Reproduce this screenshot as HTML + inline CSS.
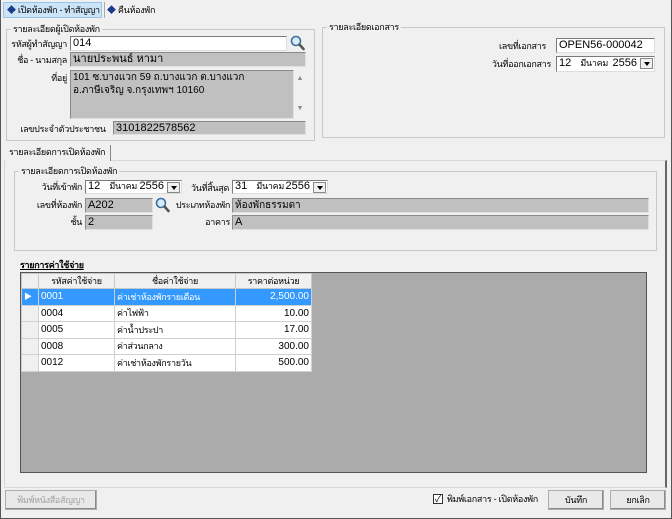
<!DOCTYPE html>
<html><head><meta charset="utf-8"><style>
*{box-sizing:border-box;margin:0;padding:0}
body{width:672px;height:519px;background:#f0f0f0;font-family:"Liberation Sans","Noto Sans CJK SC",sans-serif;font-size:11px;color:#000;position:relative;overflow:hidden}
.a{position:absolute;white-space:nowrap}
.th{font-size:9px;letter-spacing:-0.3px}
.win{left:0;top:0;width:672px;height:519px;border:1px solid #555;border-top:none}
.gb{border:1px solid #c8c8c8}
.gt{background:#f0f0f0;padding:0 2px;font-size:9px;line-height:12px;letter-spacing:-0.3px}
.lb{font-size:9px;line-height:14px;text-align:right;letter-spacing:-0.3px}
.in{border:1px solid #7a7a7a;border-right-color:#ddd;border-bottom-color:#ddd;background:#fff;padding-left:2px;line-height:13px;font-size:11px;overflow:hidden}
.ro{background:#c0c0c0;border:1px solid #8a8a8a;border-right-color:#e0e0e0;border-bottom-color:#e0e0e0}
.dd{position:absolute;right:1px;top:1px;width:13px;height:11px;background:#f0f0f0;border:1px solid #888}
.dd:after{content:"";position:absolute;left:3px;top:3px;border:3px solid transparent;border-top:4px solid #000;border-bottom:none}
.dt{font-size:11px}
.dt i{font-style:normal;font-size:9px;letter-spacing:-0.3px}
.dt b{font-weight:normal;position:absolute;right:17px;top:0}
.btn{border:1px solid #adadad;background:#e9e9e9;text-align:center;font-size:9px;line-height:18px;box-shadow:inset -1px -1px #8a8a8a;letter-spacing:-0.3px}
table{border-collapse:collapse;font-size:10px;table-layout:fixed}
td{border:1px solid #d0d0d0;height:16.5px;padding:0 2px;background:#fff;white-space:nowrap;overflow:hidden}
td.t{font-size:9px;letter-spacing:-0.3px}
th{font-weight:normal;background:#f0f0f0;border:1px solid #c8c8c8;height:15px;font-size:9px;letter-spacing:-0.3px}
</style></head><body>
<div class="a win"></div>
<div class="a th" style="left:3px;top:2px;width:99px;height:16px;background:#cce4f7;border:1px solid #99c4ea;line-height:14px;padding-left:3px"><span style="color:#1a3a8a">◆</span> เปิดห้องพัก - ทำสัญญา</div>
<div class="a" style="left:104px;top:2px;width:1px;height:16px;background:#aaa"></div>
<div class="a th" style="left:107px;top:2px;line-height:16px"><span style="color:#1a3a8a">◆</span> คืนห้องพัก</div>

<div class="a gb" style="left:6px;top:29px;width:309px;height:112px"></div>
<div class="a gt" style="left:11px;top:23px">รายละเอียดผู้เปิดห้องพัก</div>
<div class="a lb" style="left:6px;top:37px;width:61px">รหัสผู้ทำสัญญา</div>
<div class="a in" style="left:70px;top:36px;width:217px;height:15px">014</div>
<svg class="a" style="left:290px;top:35px" width="15" height="16" viewBox="0 0 15 16"><circle cx="6" cy="6" r="4.5" fill="#d8ecf8" stroke="#3a6ea5" stroke-width="1.6"/><path d="M9.5 9.5L13.5 14" stroke="#555" stroke-width="2.6" stroke-linecap="round"/></svg>
<div class="a lb" style="left:6px;top:53px;width:61px">ชื่อ - นามสกุล</div>
<div class="a in ro" style="left:70px;top:52px;width:236px;height:15px">นายประพนธ์ หามา</div>
<div class="a lb" style="left:6px;top:71px;width:61px">ที่อยู่</div>
<div class="a in ro" style="left:70px;top:70px;width:224px;height:49px;white-space:normal;line-height:13px;font-size:10px">101 ซ.บางแวก 59 ถ.บางแวก ต.บางแวก อ.ภาษีเจริญ จ.กรุงเทพฯ 10160</div>
<div class="a" style="left:294px;top:70px;width:12px;height:49px;color:#888;font-size:7px;text-align:center;line-height:10px;padding-top:4px;white-space:normal">▲<br><br><br>▼</div>
<div class="a lb" style="left:20px;top:122px;width:86px;text-align:center">เลขประจำตัวประชาชน</div>
<div class="a in ro" style="left:113px;top:121px;width:193px;height:14px;line-height:12px">3101822578562</div>

<div class="a gb" style="left:322px;top:27px;width:343px;height:111px"></div>
<div class="a gt" style="left:327px;top:21px">รายละเอียดเอกสาร</div>
<div class="a lb" style="left:440px;top:39px;width:106px">เลขที่เอกสาร</div>
<div class="a in" style="left:556px;top:38px;width:99px;height:15px">OPEN56-000042</div>
<div class="a lb" style="left:440px;top:57px;width:111px">วันที่ออกเอกสาร</div>
<div class="a in dt" style="left:556px;top:56px;width:99px;height:16px">12 &nbsp; <i>มีนาคม</i><b>2556</b><span class="dd"></span></div>

<div class="a" style="left:4px;top:160px;width:663px;height:328px;border:1px solid #d8d8d8;border-right:2px solid #666"></div>
<div class="a th" style="left:6px;top:145px;width:105px;height:16px;border-right:1px solid #888;background:#f0f0f0;line-height:15px;padding-left:3px">รายละเอียดการเปิดห้องพัก</div>

<div class="a gb" style="left:14px;top:171px;width:643px;height:80px"></div>
<div class="a gt" style="left:19px;top:165px">รายละเอียดการเปิดห้องพัก</div>
<div class="a lb" style="left:20px;top:180px;width:62px">วันที่เข้าพัก</div>
<div class="a in dt" style="left:85px;top:180px;width:97px;height:14px;line-height:11px">12 &nbsp; <i>มีนาคม</i><b>2556</b><span class="dd"></span></div>
<div class="a lb" style="left:185px;top:181px;width:44px">วันที่สิ้นสุด</div>
<div class="a in dt" style="left:232px;top:180px;width:96px;height:14px;line-height:11px">31 &nbsp; <i>มีนาคม</i><b>2556</b><span class="dd"></span></div>
<div class="a lb" style="left:20px;top:198px;width:62px">เลขที่ห้องพัก</div>
<div class="a in ro" style="left:85px;top:198px;width:68px;height:15px">A202</div>
<svg class="a" style="left:155px;top:197px" width="15" height="16" viewBox="0 0 15 16"><circle cx="6" cy="6" r="4.5" fill="#d8ecf8" stroke="#3a6ea5" stroke-width="1.6"/><path d="M9.5 9.5L13.5 14" stroke="#555" stroke-width="2.6" stroke-linecap="round"/></svg>
<div class="a lb" style="left:170px;top:198px;width:60px">ประเภทห้องพัก</div>
<div class="a in ro" style="left:232px;top:198px;width:417px;height:15px;font-size:10px">ห้องพักธรรมดา</div>
<div class="a lb" style="left:20px;top:215px;width:62px">ชั้น</div>
<div class="a in ro" style="left:85px;top:215px;width:68px;height:15px">2</div>
<div class="a lb" style="left:170px;top:215px;width:60px">อาคาร</div>
<div class="a in ro" style="left:232px;top:215px;width:417px;height:15px">A</div>

<div class="a" style="left:20px;top:258px;font-size:9px;font-weight:bold;text-decoration:underline;letter-spacing:-0.3px">รายการค่าใช้จ่าย</div>
<div class="a" style="left:20px;top:272px;width:627px;height:201px;background:#ababab;border:1px solid #555">
<table style="width:291px">
<tr><th style="width:17px"></th><th style="width:76px">รหัสค่าใช้จ่าย</th><th style="width:121px">ชื่อค่าใช้จ่าย</th><th>ราคาต่อหน่วย</th></tr>
<tr><td style="background:#3399ff;color:#fff;font-size:8px">▶</td><td style="background:#3399ff;color:#fff">0001</td><td class="t" style="background:#3399ff;color:#fff">ค่าเช่าห้องพักรายเดือน</td><td style="background:#3399ff;color:#fff;text-align:right">2,500.00</td></tr>
<tr><td style="background:#f0f0f0"></td><td>0004</td><td class="t">ค่าไฟฟ้า</td><td style="text-align:right">10.00</td></tr>
<tr><td style="background:#f0f0f0"></td><td>0005</td><td class="t">ค่าน้ำประปา</td><td style="text-align:right">17.00</td></tr>
<tr><td style="background:#f0f0f0"></td><td>0008</td><td class="t">ค่าส่วนกลาง</td><td style="text-align:right">300.00</td></tr>
<tr><td style="background:#f0f0f0"></td><td>0012</td><td class="t">ค่าเช่าห้องพักรายวัน</td><td style="text-align:right">500.00</td></tr>
</table></div>

<div class="a btn" style="left:5px;top:490px;width:92px;height:20px;color:#a0a0a0">พิมพ์หนังสือสัญญา</div>
<div class="a" style="left:433px;top:494px;width:10px;height:10px;border:1px solid #333;background:#fff;font-size:9px;line-height:8px;text-align:center">✓</div>
<div class="a th" style="left:447px;top:492px;line-height:14px">พิมพ์เอกสาร - เปิดห้องพัก</div>
<div class="a btn" style="left:548px;top:490px;width:56px;height:20px">บันทึก</div>
<div class="a btn" style="left:610px;top:490px;width:56px;height:20px">ยกเลิก</div>
</body></html>
